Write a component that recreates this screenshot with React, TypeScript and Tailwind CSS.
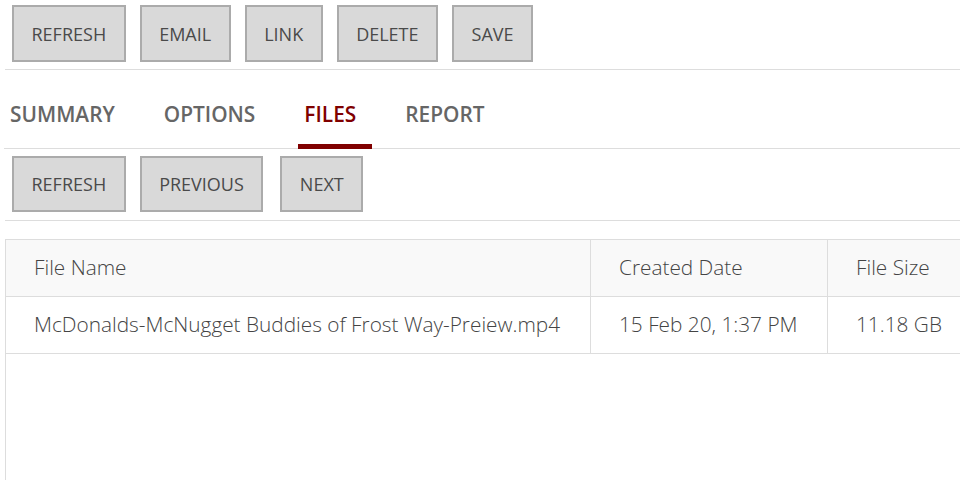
import React from "react";

const font = { fontFamily: '"Open Sans", "Liberation Sans", sans-serif' };

function Btn({ label, h, extra = "" }: { label: string; h: string; extra?: string }) {
  return (
    <button
      className={`${h} ${extra} px-[17.5px] border-2 border-[#ababab] bg-[#d9d9d9] text-[#4a4a4a] text-[18px] leading-none uppercase`}
    >
      {label}
    </button>
  );
}

export default function App() {
  const tabs = ["SUMMARY", "OPTIONS", "FILES", "REPORT"];
  return (
    <div className="w-[960px] h-[480px] overflow-hidden bg-white pl-[5px]" style={font}>
      <div className="flex gap-[14px] pl-[7px] pt-[5px] pb-[7px] border-b border-[#dddddd]">
        {["REFRESH", "EMAIL", "LINK", "DELETE", "SAVE"].map((l) => (
          <Btn key={l} label={l} h="h-[57px]" />
        ))}
      </div>
      <div className="flex gap-[27px] -ml-px h-[79px] items-stretch border-b border-[#dddddd]">
        {tabs.map((t) => {
          const active = t === "FILES";
          return (
            <div
              key={t}
              className={`flex items-center pl-[6px] pr-[16px] pt-[16px] text-[20.85px] font-semibold border-b-[5px] -mb-px ${
                active ? "text-[#800000] border-[#800000]" : "text-[#666666] border-transparent"
              }`}
            >
              {t}
            </div>
          );
        })}
      </div>
      <div className="flex gap-[14px] pl-[7px] pt-[7px] pb-[8px] border-b border-[#dddddd]">
        <Btn label="REFRESH" h="h-[56px]" />
        <Btn label="PREVIOUS" h="h-[56px]" />
        <Btn label="NEXT" h="h-[56px]" extra="ml-[3px]" />
      </div>
      <div className="mt-[18px] border-l border-t border-[#dddddd] h-[300px] w-[1000px] text-[20.8px] font-light text-[#444444]">
        <div className="flex h-[57px] bg-[#f9f9f9] border-b border-[#dddddd]">
          <div className="w-[585px] border-r border-[#dddddd] flex items-center pl-[28px]">File Name</div>
          <div className="w-[237px] border-r border-[#dddddd] flex items-center pl-[28px]">Created Date</div>
          <div className="flex-1 flex items-center pl-[28px]">File Size</div>
        </div>
        <div className="flex h-[57px] border-b border-[#dddddd]">
          <div className="w-[585px] border-r border-[#dddddd] flex items-center pl-[28px]">
            McDonalds-McNugget Buddies of Frost Way-Preiew.mp4
          </div>
          <div className="w-[237px] border-r border-[#dddddd] flex items-center pl-[28px]">15 Feb 20, 1:37 PM</div>
          <div className="flex-1 flex items-center pl-[28px]">11.18 GB</div>
        </div>
      </div>
    </div>
  );
}
